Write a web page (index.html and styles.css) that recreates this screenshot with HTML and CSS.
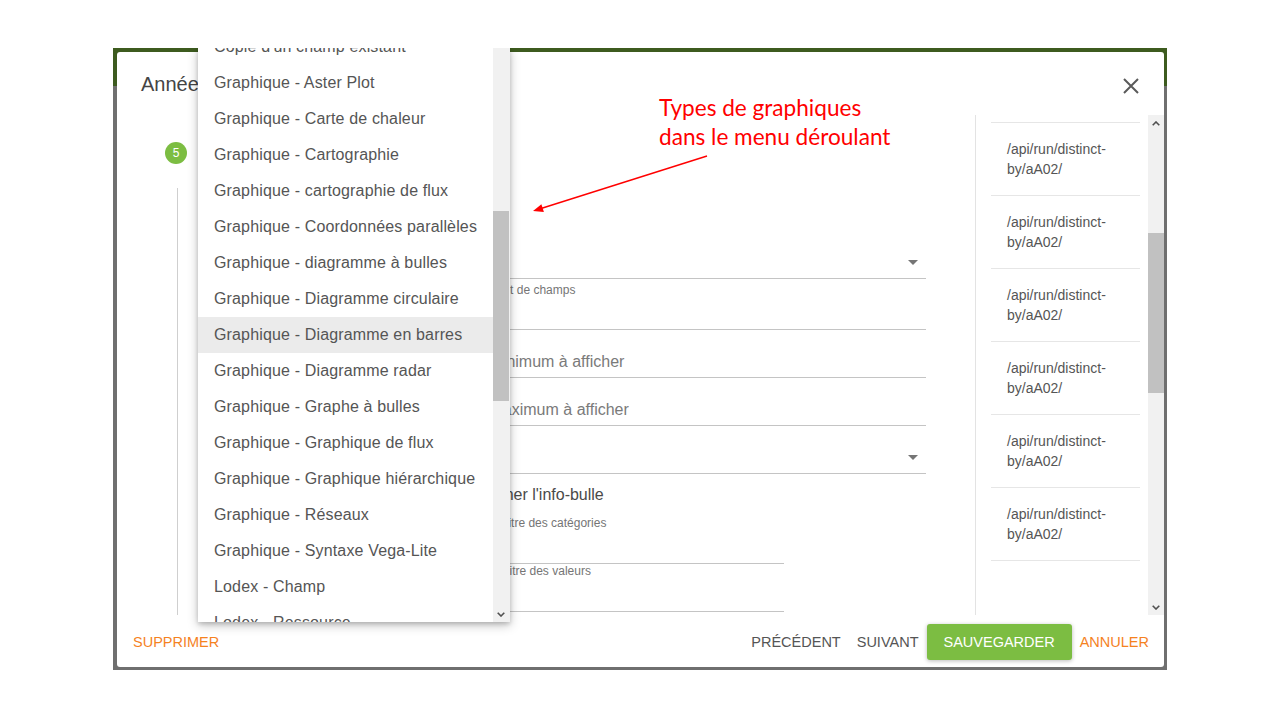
FILE: index.html
```html
<!DOCTYPE html>
<html lang="fr">
<head>
<meta charset="utf-8">
<title>Lodex - Graphiques</title>
<link rel="stylesheet" href="styles.css">
</head>
<body>
<div class="shot">
  <div class="modal">
    <header class="modal-head">
      <h2 class="modal-title">Année</h2>
      <button class="close" aria-label="Fermer">
        <svg width="24" height="24" viewBox="0 0 24 24"><path d="M5 5L19 19M19 5L5 19" stroke="#5a5a5a" stroke-width="2" fill="none"/></svg>
      </button>
    </header>
    <div class="modal-body">
      <div class="steps">
        <div class="stepper">
          <span class="step-num">5</span>
          <span class="step-line"></span>
        </div>
        <div class="form">
          <div class="field f-select f-first"><span class="value">Diagramme en barres</span><svg class="caret" width="10" height="5" viewBox="0 0 10 5"><path d="M0 0H10L5 5Z" fill="#757575"/></svg></div>
          <div class="field f-label"><span class="label">Nombre maximum de valeurs pour ajout de champs</span></div>
          <div class="field f-text"><span class="hint">Valeur de l'axe vertical (Y) minimum à afficher</span></div>
          <div class="field f-text"><span class="hint">Valeur de l'axe vertical (Y) maximum à afficher</span></div>
          <div class="field f-select"><span class="value">Trier par valeur</span><svg class="caret" width="10" height="5" viewBox="0 0 10 5"><path d="M0 0H10L5 5Z" fill="#757575"/></svg></div>
          <div class="check-row">Cocher cette case afin d'afficher l'info-bulle</div>
          <div class="field f-label f-short"><span class="label">Libellé de l'axe horizontal (abscisses), titre des catégories</span></div>
          <div class="field f-label f-short"><span class="label">Libellé de l'axe vertical (ordonnées Y), titre des valeurs</span></div>
        </div>
      </div>
      <aside class="side">
        <ul class="routes">
          <li>/api/run/distinct-by/aA02/</li>
          <li>/api/run/distinct-by/aA02/</li>
          <li>/api/run/distinct-by/aA02/</li>
          <li>/api/run/distinct-by/aA02/</li>
          <li>/api/run/distinct-by/aA02/</li>
          <li>/api/run/distinct-by/aA02/</li>
        </ul>
        <div class="scrollbar">
          <span class="sb-btn"><svg width="8" height="5" viewBox="0 0 8 5"><path d="M0.7 4.3L4 1L7.3 4.3" stroke="#505050" stroke-width="1.6" fill="none"/></svg></span>
          <span class="sb-thumb side-thumb"></span>
          <span class="sb-fill"></span>
          <span class="sb-btn"><svg width="8" height="5" viewBox="0 0 8 5"><path d="M0.7 0.7L4 4L7.3 0.7" stroke="#505050" stroke-width="1.6" fill="none"/></svg></span>
        </div>
      </aside>
    </div>
    <footer class="modal-foot">
      <button class="btn btn-warn">Supprimer</button>
      <span class="spacer"></span>
      <button class="btn">Précédent</button>
      <button class="btn">Suivant</button>
      <button class="btn btn-primary">Sauvegarder</button>
      <button class="btn btn-warn">Annuler</button>
    </footer>
  </div>

  <div class="menu">
    <ul class="menu-list">
      <li>Copie d'un champ existant</li>
      <li>Graphique - Aster Plot</li>
      <li>Graphique - Carte de chaleur</li>
      <li>Graphique - Cartographie</li>
      <li>Graphique - cartographie de flux</li>
      <li>Graphique - Coordonnées parallèles</li>
      <li>Graphique - diagramme à bulles</li>
      <li>Graphique - Diagramme circulaire</li>
      <li class="active">Graphique - Diagramme en barres</li>
      <li>Graphique - Diagramme radar</li>
      <li>Graphique - Graphe à bulles</li>
      <li>Graphique - Graphique de flux</li>
      <li>Graphique - Graphique hiérarchique</li>
      <li>Graphique - Réseaux</li>
      <li>Graphique - Syntaxe Vega-Lite</li>
      <li>Lodex - Champ</li>
      <li>Lodex - Ressource</li>
    </ul>
    <div class="scrollbar menu-sb">
      <span class="sb-thumb menu-thumb"></span>
      <span class="sb-fill"></span>
      <span class="sb-btn"><svg width="8" height="5" viewBox="0 0 8 5"><path d="M0.7 0.7L4 4L7.3 0.7" stroke="#505050" stroke-width="1.6" fill="none"/></svg></span>
    </div>
  </div>
</div>

<p class="note">Types de graphiques<br>dans le menu déroulant</p>
<svg class="note-arrow" width="1280" height="720" viewBox="0 0 1280 720">
  <line x1="707" y1="156" x2="541" y2="208.5" stroke="#ff0000" stroke-width="1.4"/>
  <polygon points="533,211 543.9,211.9 541.4,204.3" fill="#ff0000"/>
</svg>
</body>
</html>
```

FILE: styles.css
```css
* { box-sizing: border-box; margin: 0; padding: 0; }
html, body { width: 1280px; height: 720px; background: #fff; overflow: hidden; }
body { font-family: "Liberation Sans", Arial, sans-serif; color: #555; position: relative; }
ul { list-style: none; }
button { font-family: inherit; background: none; border: 0; cursor: pointer; }

.shot {
  position: relative;
  margin: 48px 0 0 113px;
  width: 1054px;
  height: 622px;
  overflow: hidden;
  padding: 4px 3px 3px 4px;
  background: linear-gradient(#3d5b1f 0, #3d5b1f 38px, #6f6f6f 38px);
}

.modal {
  width: 1047px;
  height: 615px;
  background: #fff;
  border-radius: 3px;
  display: flex;
  flex-direction: column;
}

.modal-head {
  height: 63px;
  display: flex;
  align-items: center;
  justify-content: space-between;
  padding: 2px 21px 0 24px;
}
.modal-title { font-weight: normal; font-size: 20px; color: #444; }
.close { width: 24px; height: 24px; margin-top: 2px; display: flex; }

.modal-body { height: 500px; display: flex; }

.steps {
  width: 859px;
  border-right: 1px solid #e3e3e3;
  display: grid;
  grid-template-columns: 22px 1fr;
  column-gap: 113px;
  padding: 0 49px 0 48px;
}

.stepper { display: flex; flex-direction: column; padding-top: 27px; }
.step-num {
  width: 22px; height: 22px; border-radius: 50%;
  background: #7cbd42; color: #fff;
  font-size: 12px; line-height: 22px; text-align: center;
}
.step-line { width: 1px; flex: 1; background: #cfcfcf; margin: 24px 0 0 12px; }

.form { margin-top: 115px; display: flex; flex-direction: column; }
.field {
  height: 48px;
  border-bottom: 1px solid #c4c4c4;
  display: flex;
  white-space: nowrap;
}
.f-select { align-items: flex-end; justify-content: space-between; padding: 0 8px 13px 0; font-size: 16px; color: #555; }
.f-first { height: 49px; }
.f-select .value { line-height: 20px; margin-bottom: -5px; }
.f-label { height: 51px; align-items: flex-start; padding-top: 4px; }
.f-label .label { font-size: 12px; line-height: 14px; color: #757575; }
.f-short { width: 484px; height: 48px; padding-top: 0; }
.f-text { align-items: flex-end; padding-bottom: 5px; }
.f-text .hint { font-size: 16px; line-height: 20px; color: #7a7a7a; }
.check-row { height: 42px; padding-top: 11px; font-size: 16px; line-height: 20px; color: #4a4a4a; white-space: nowrap; }

.side { flex: 1; display: flex; padding-left: 15px; }
.routes { width: 149px; margin-right: 8px; padding-top: 7px; }
.routes li {
  border-top: 1px solid #e6e6e6;
  padding: 16px;
  font-size: 14px;
  line-height: 20px;
  color: #555;
}
.routes li:last-child { border-bottom: 1px solid #e6e6e6; }

.scrollbar { width: 16px; background: #f1f1f1; display: flex; flex-direction: column; align-items: center; }
.sb-btn { width: 16px; height: 16px; display: flex; align-items: center; justify-content: center; }
.sb-thumb { width: 100%; background: #c1c1c1; }
.sb-fill { flex: 1; }
.side-thumb { margin-top: 102px; height: 160px; }

.modal-foot {
  height: 52px;
  display: flex;
  align-items: center;
  padding: 2px 7px 0 8px;
}
.spacer { flex: 1; }
.btn {
  height: 36px;
  padding: 0 8px;
  font-size: 14.5px;
  text-transform: uppercase;
  color: #555;
  border-radius: 3px;
}
.btn-warn { color: #f5821f; }
.btn-primary {
  background: #7cbd42;
  color: #fff;
  padding: 0 17px;
  box-shadow: 0 1px 4px rgba(0, 0, 0, 0.28);
}

.menu {
  position: absolute;
  left: 85px;
  top: 0;
  width: 312px;
  height: 574px;
  background: #fff;
  box-shadow: 0 3px 10px rgba(0, 0, 0, 0.25), 0 2px 4px rgba(0, 0, 0, 0.15);
  display: flex;
  overflow: hidden;
}
.menu-list { flex: 1; margin-top: -19px; }
.menu-list li {
  height: 36px;
  line-height: 36px;
  padding: 0 16px;
  font-size: 16px;
  letter-spacing: 0.15px;
  color: #555;
  white-space: nowrap;
}
.menu-list li.active { background: #ebebeb; }
.menu-sb { width: 17px; padding-right: 1px; }
.menu-thumb { margin-top: 163px; height: 190px; }

.note {
  position: absolute;
  left: 659px;
  top: 93px;
  font-family: Lato, "Open Sans", sans-serif;
  font-size: 22.6px;
  line-height: 29px;
  color: #ff0000;
}
.note-arrow { position: absolute; left: 0; top: 0; pointer-events: none; }
```
